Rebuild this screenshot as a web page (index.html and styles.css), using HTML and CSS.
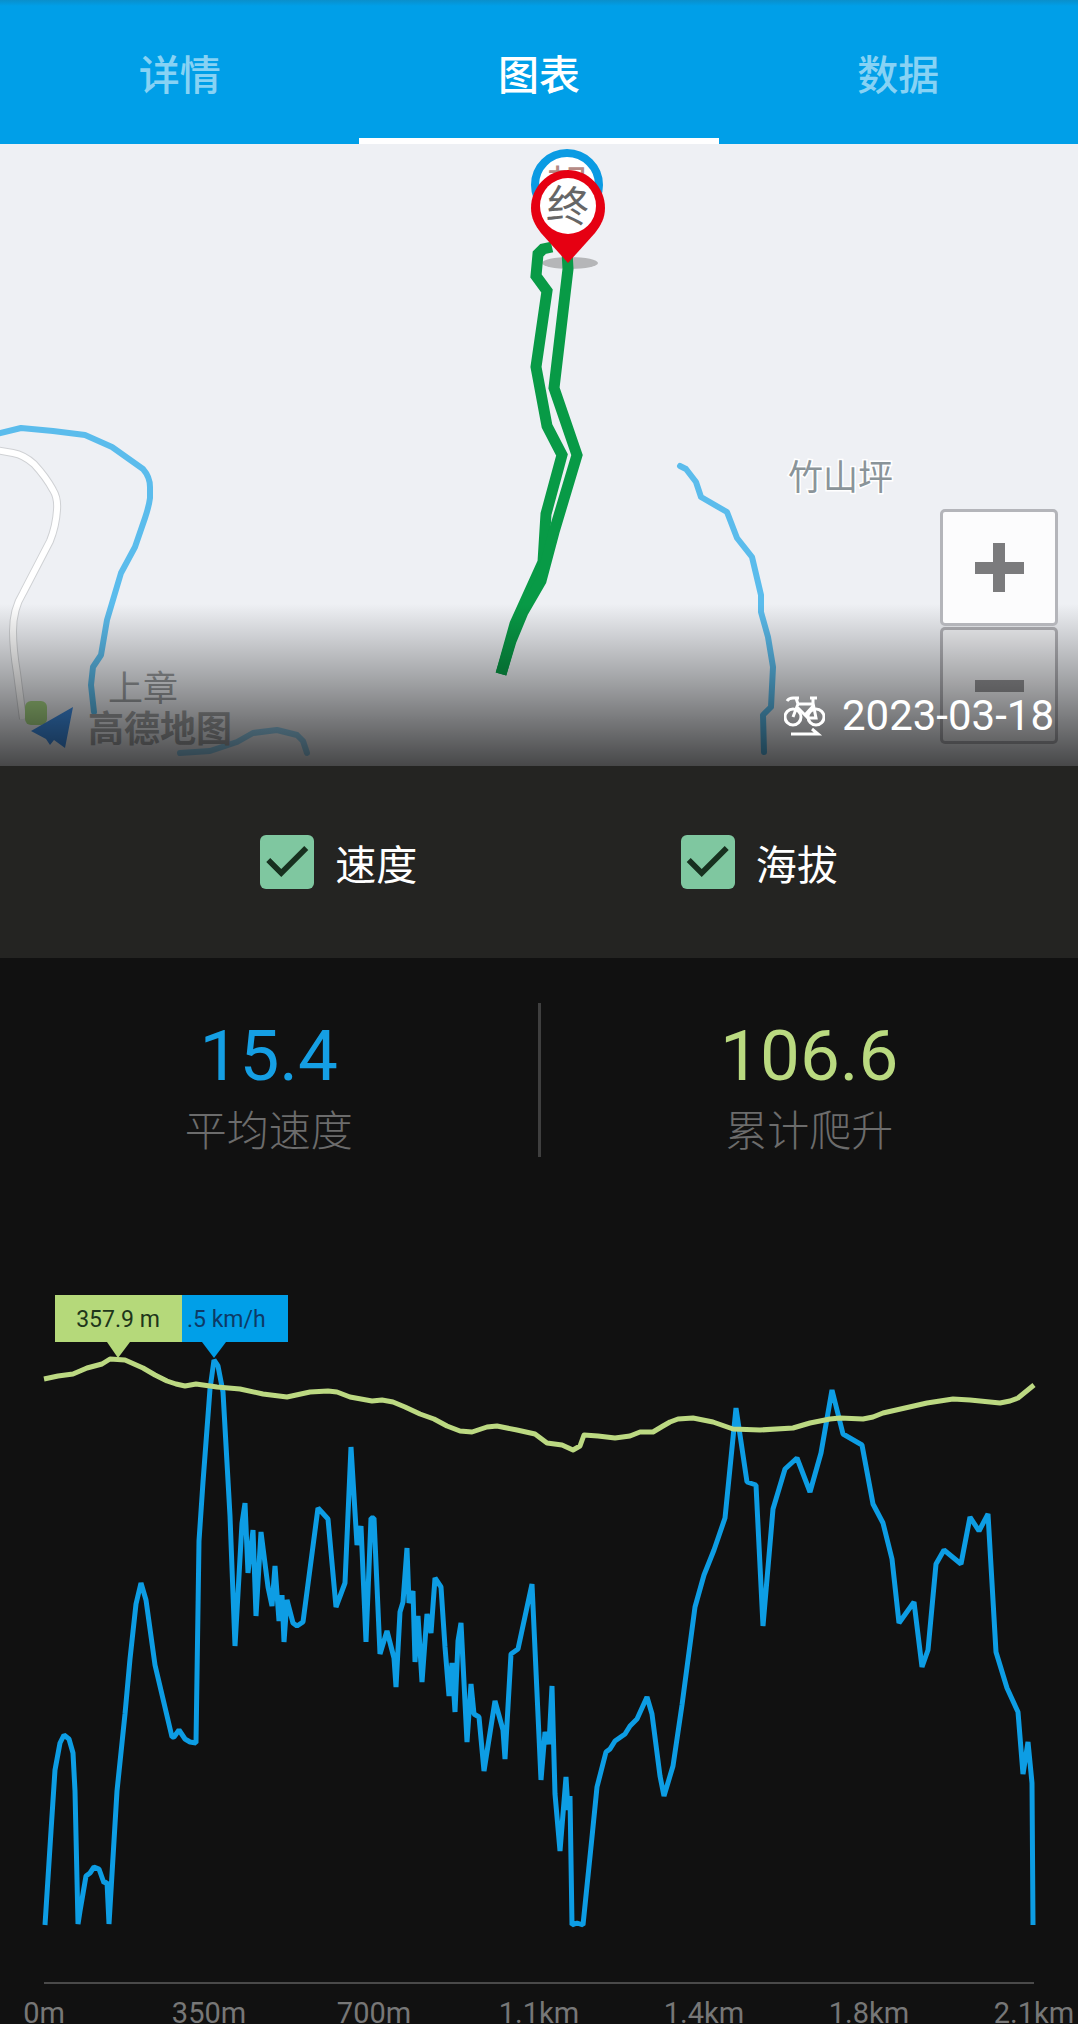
FILE: index.html
```html
<!DOCTYPE html>
<html lang="zh-CN">
<head>
  <meta charset="UTF-8">
  <meta name="viewport" content="width=device-width, initial-scale=1.0">
  <title>骑行图表</title>
  <link rel="stylesheet" href="styles.css">
</head>
<body>
  <!-- Tabs -->
  <nav class="tabs">
    <button class="tab">详情</button>
    <button class="tab active">图表</button>
    <button class="tab">数据</button>
  </nav>

  <!-- Map Section -->
  <section class="map">
    <svg class="map-canvas" viewBox="0 0 1078 622" preserveAspectRatio="xMidYMid slice">
      <g class="road">
        <path class="road-edge" d="M-4 306 L13 309 Q24 311 34 320 Q46 333 53 346 Q58 354 57 366 Q56 382 50 397 L23 449 Q13 465 13 487 Q13 505 17 529 L23 575" />
        <path class="road-fill" d="M-4 306 L13 309 Q24 311 34 320 Q46 333 53 346 Q58 354 57 366 Q56 382 50 397 L23 449 Q13 465 13 487 Q13 505 17 529 L23 575" />
      </g>
      <g class="river">
        <path d="M-4 290 L21 284 L53 287 L85 291 L112 303 L143 325 Q150 333 150 343 V354 Q149 362 145 374 L135 403 L121 429 L107 476 L101 511 L93 523 L91 541 L94 568" />
        <path d="M680 322 L686 325 L696 338 L701 353 L727 368 L737 394 L752 413 L761 451 L761 468 L768 493 L773 523 L771 563 L763 571 L764 608" />
        <path class="faint" d="M180 609 L210 607 L237 598 L253 589 L277 586 L297 591 L303 597 L307 609" />
      </g>
      <text class="place" x="788" y="346">竹山坪</text>
      <text class="place dim" x="108" y="557">上章</text>
      <rect x="25" y="557" width="22" height="24" rx="6" fill="#a9d886" />
      <path d="M31 587 L73 563 L65 604 L54 596 L50 601 L46 595 Z" fill="#3f8fe6" />
      <text class="brand" x="88" y="598">高德地图</text>

      <!-- Start pin, mostly under the end pin -->
      <circle cx="567" cy="41" r="32" fill="#fff" stroke="#0b9be3" stroke-width="8" />
      <text class="pin-text start" x="567" y="57">起</text>
      <ellipse cx="570" cy="119" rx="28" ry="6" fill="#b5b6b8" />
      <g class="route">
        <polyline points="552,103 543,105 538,110 536,132 547,147 536,223 547,282 562,311 546,370 543,418 515,480 501,530" />
        <polyline points="567,107 568,125 554,244 577,311 554,388 541,437 523,468 511,497 501,530" />
      </g>
      <path d="M568 26 C548 26 531 43 531 64 C531 74 535 81 541 89 L568 119 L595 89 C601 81 605 74 605 64 C605 43 588 26 568 26 Z" fill="#e60012" />
      <circle cx="568" cy="62" r="28" fill="#fff" />
      <text class="pin-text" x="568" y="77" transform="rotate(5 568 62)">终</text>
    </svg>
    <div class="zoom">
      <button class="zoom-btn zoom-in" aria-label="放大"></button>
      <button class="zoom-btn zoom-out" aria-label="缩小"></button>
    </div>
    <div class="shade"></div>
    <div class="caption">
      <svg class="bike" viewBox="0 0 41 40">
        <circle cx="9" cy="21" r="8" />
        <circle cx="32" cy="21" r="8" />
        <path d="M3 5 Q5 2 9 2 H15 M12 2 L14 8 L9 21 M14 8 H30 M13 11 L24 22 H32 L29 7 V2 M26 2 H33 M21 19 L30 9" />
        <path d="M7 38 H34 L28 33" />
      </svg>
      <time datetime="2023-03-18">2023-03-18</time>
    </div>
  </section>

  <!-- Series toggles -->
  <section class="filters">
    <label class="filter" for="show-speed"><input type="checkbox" id="show-speed" checked>速度</label>
    <label class="filter" for="show-altitude"><input type="checkbox" id="show-altitude" checked>海拔</label>
  </section>

  <!-- Summary -->
  <section class="stats">
    <div class="stat">
      <div class="value speed">15.4</div>
      <div class="name">平均速度</div>
    </div>
    <div class="stat">
      <div class="value climb">106.6</div>
      <div class="name">累计爬升</div>
    </div>
  </section>

  <!-- Chart -->
  <section class="chart">
    <svg viewBox="0 1260 1078 764">
      <polyline class="line-speed" points="45,1925 51,1831 55,1770 60,1743 64,1735 69,1739 73,1753 75,1791 78,1924 80,1911 86,1876 90,1873 94,1867 99,1869 104,1883 107,1882 109,1924 117,1791 125,1714 130,1659 136,1604 141,1583 146,1600 155,1665 172,1737 174,1737 179,1730 185,1739 190,1742 196,1743 199,1541 203,1482 210,1389 214,1360 218,1366 223,1392 230,1516 235,1646
        242,1523 245,1503 248,1573 253,1530 256,1616 261,1532 268,1587 272,1606 275,1566 279,1621 282,1595 284,1642 287,1600 293,1623 297,1626 303,1622 318,1508 328,1519 336,1607 345,1583 351,1447 357,1545 361,1526 366,1642 371,1518 374,1518 380,1654 387,1631 394,1658 396,1687 400,1612 403,1602 407,1548 409,1603 413,1591 415,1662 418,1616 422,1682 427,1614 431,1633 435,1578 441,1587 445,1647 449,1696
        452,1663 455,1712 458,1641 461,1623 467,1742 471,1684 474,1714 479,1717 484,1771 495,1701 503,1730 505,1759 511,1654 518,1649 532,1584 541,1780 545,1732 549,1744 552,1686 555,1794 560,1851 566,1777 568,1810 570,1796 572,1925 577,1923 583,1925
        592,1837 597,1787 606,1752 610,1749 615,1741 625,1734 630,1726 637,1719 647,1697 652,1714 660,1776 664,1796 673,1766 682,1705 695,1607 704,1575 714,1550 725,1518 736,1408 747,1482 756,1485 763,1626 773,1509 785,1469 797,1458 810,1492 821,1453
        832,1390 843,1434 862,1445 873,1504 883,1523 892,1559 899,1623 914,1602 922,1667 928,1650 936,1564 944,1550 961,1564 970,1517 979,1531 988,1514 996,1652 1007,1688 1018,1712 1023,1774 1028,1742 1032,1783 1033,1925" />
      <polyline class="line-altitude" points="44,1379 58,1376 73,1374 80,1371 87,1368 102,1364 110,1359 125,1360 143,1368 155,1375 167,1381 176,1384 185,1386 196,1384 217,1387 240,1389 263,1394 287,1397 310,1392 328,1391 337,1392 350,1397 372,1401 382,1400 393,1402 405,1407 420,1414 434,1419 447,1426 460,1431 472,1432 487,1427 497,1426 517,1430 535,1434 547,1443 562,1445 573,1450 580,1446 584,1435
        598,1436 615,1438 630,1436 640,1432 653,1432 663,1426 670,1422 678,1419 693,1418 713,1422 733,1429 760,1430 793,1428 810,1423 830,1419 840,1418 863,1419 873,1417 883,1413 905,1408 927,1403 953,1399 970,1400 1000,1403 1010,1401 1018,1398 1034,1385" />

      <path d="M182 1295 H288 V1342 H226 L214 1358 L202 1342 H182 Z" fill="#009fe8" />
      <text class="tip tip-speed" x="187" y="1327">.5 km/h</text>
      <path d="M55 1295 H182 V1342 H130 L118 1358 L107 1342 H55 Z" fill="#b5d97a" />
      <text class="tip tip-altitude" x="118" y="1327" text-anchor="middle">357.9 m</text>

      <line class="axis" x1="44" y1="1983" x2="1034" y2="1983" />
      <g class="ticks">
        <text x="44" y="2023">0m</text>
        <text x="209" y="2023">350m</text>
        <text x="374" y="2023">700m</text>
        <text x="539" y="2023">1.1km</text>
        <text x="704" y="2023">1.4km</text>
        <text x="869" y="2023">1.8km</text>
        <text x="1034" y="2023">2.1km</text>
      </g>
    </svg>
  </section>
</body>
</html>
```
FILE: styles.css
```css
/* General Styling */
* {
  box-sizing: border-box;
}

body {
  margin: 0;
  background: #111111;
  color: white;
  font-family: Roboto, "Noto Sans CJK SC", sans-serif;
}

svg {
  display: block;
}

button {
  border: none;
  padding: 0;
  font-family: inherit;
  cursor: pointer;
}

/* Tabs */
.tabs {
  display: flex;
  height: 144px;
  background: linear-gradient(#0a8fcb, #009fe8 6px);
}

.tab {
  flex: 1;
  background: none;
  color: rgba(255, 255, 255, 0.55);
  font-size: 41px;
  font-weight: 500;
  border-top: 6px solid transparent;
  border-bottom: 6px solid transparent;
}

.tab.active {
  color: white;
  border-bottom-color: white;
}

/* Map */
.map {
  position: relative;
  aspect-ratio: 1078 / 622;
  background: #eef0f4;
  overflow: hidden;
}

.map-canvas {
  width: 100%;
  height: 100%;
}

.river path {
  fill: none;
  stroke: #5bbcec;
  stroke-width: 6;
  stroke-linecap: round;
  stroke-linejoin: round;
}

.river .faint {
  opacity: 0.6;
}

.road path {
  fill: none;
}

.road-edge {
  stroke: #cfd1d4;
  stroke-width: 8;
}

.road-fill {
  stroke: white;
  stroke-width: 6;
}

.route polyline {
  fill: none;
  stroke: #089a46;
  stroke-width: 11;
}

.place {
  font-size: 35px;
  fill: #8a9499;
  stroke: white;
  stroke-width: 3px;
  paint-order: stroke;
}

.place.dim {
  fill: #9a9da0;
  stroke: none;
}

.brand {
  font-size: 36px;
  font-weight: 700;
  fill: #a3a5a7;
}

.pin-text {
  font-size: 42px;
  fill: #666666;
  text-anchor: middle;
}

.pin-text.start {
  fill: #b58a85;
}

.shade {
  position: absolute;
  left: 0;
  right: 0;
  bottom: 0;
  height: 26%;
  background: linear-gradient(rgba(0, 0, 0, 0), rgba(0, 0, 0, 0.34) 50%, rgba(0, 0, 0, 0.7));
}

.zoom {
  position: absolute;
  right: 20px;
  bottom: 22px;
  display: flex;
  flex-direction: column;
  gap: 1px;
}

.zoom-btn {
  position: relative;
  width: 118px;
  height: 117px;
  border: 3px solid #b4b5ba;
  border-radius: 5px;
  background: #fcfcfd;
}

.zoom-in {
  z-index: 1;
}

.zoom-out {
  border-color: rgba(150, 150, 155, 0.7);
  background: rgba(255, 255, 255, 0.3);
}

.zoom-btn::before,
.zoom-in::after {
  content: "";
  position: absolute;
  inset: 0;
  margin: auto;
  width: 49px;
  height: 12px;
  background: #7b7b7d;
}

.zoom-in::after {
  width: 12px;
  height: 49px;
}

.zoom-out::before {
  background: #939396;
}

.caption {
  position: absolute;
  right: 24px;
  bottom: 25px;
  z-index: 2;
  display: flex;
  align-items: center;
  gap: 17px;
  font-size: 42px;
  line-height: 50px;
}

.bike {
  width: 41px;
  height: 40px;
  fill: none;
  stroke: white;
  stroke-width: 3;
}

/* Series toggles */
.filters {
  display: flex;
  height: 192px;
  padding: 0 11%;
  background: #242422;
}

.filter {
  flex: 1;
  display: flex;
  align-items: center;
  justify-content: center;
  gap: 21px;
  padding-left: 20px;
  font-size: 41px;
  cursor: pointer;
}

.filter input {
  appearance: none;
  margin: 0;
  width: 54px;
  height: 54px;
  border-radius: 6px;
  background: #7fc7a0;
  cursor: pointer;
}

.filter input:checked::before {
  content: "";
  display: block;
  width: 54px;
  height: 54px;
  background: #17301f;
  clip-path: polygon(6px 27px, 10px 23px, 21px 34px, 44px 11px, 48px 15px, 21px 42px);
}

/* Summary */
.stats {
  display: flex;
  padding-top: 45px;
}

.stat {
  flex: 1;
  height: 154px;
  padding-top: 17px;
  text-align: center;
}

.stat + .stat {
  border-left: 3px solid #3f3f3f;
}

.value {
  font-size: 71px;
  line-height: 72px;
}

.value.speed {
  color: #159fe4;
}

.value.climb {
  color: #bada80;
}

.name {
  margin-top: 16px;
  font-size: 42px;
  font-weight: 300;
  line-height: 48px;
  color: #6c6c6c;
}

/* Chart */
.chart {
  padding-top: 103px;
}

.line-speed,
.line-altitude {
  fill: none;
  stroke: #0d9de4;
  stroke-width: 5;
  stroke-linejoin: bevel;
}

.line-altitude {
  stroke: #bcd982;
  stroke-linejoin: round;
}

.tip {
  font-size: 23px;
  fill: #20351a;
}

.tip-speed {
  fill: #0d3a66;
}

.axis {
  stroke: #4a4a4a;
  stroke-width: 2;
}

.ticks text {
  font-size: 29px;
  fill: #777777;
  text-anchor: middle;
}
```
